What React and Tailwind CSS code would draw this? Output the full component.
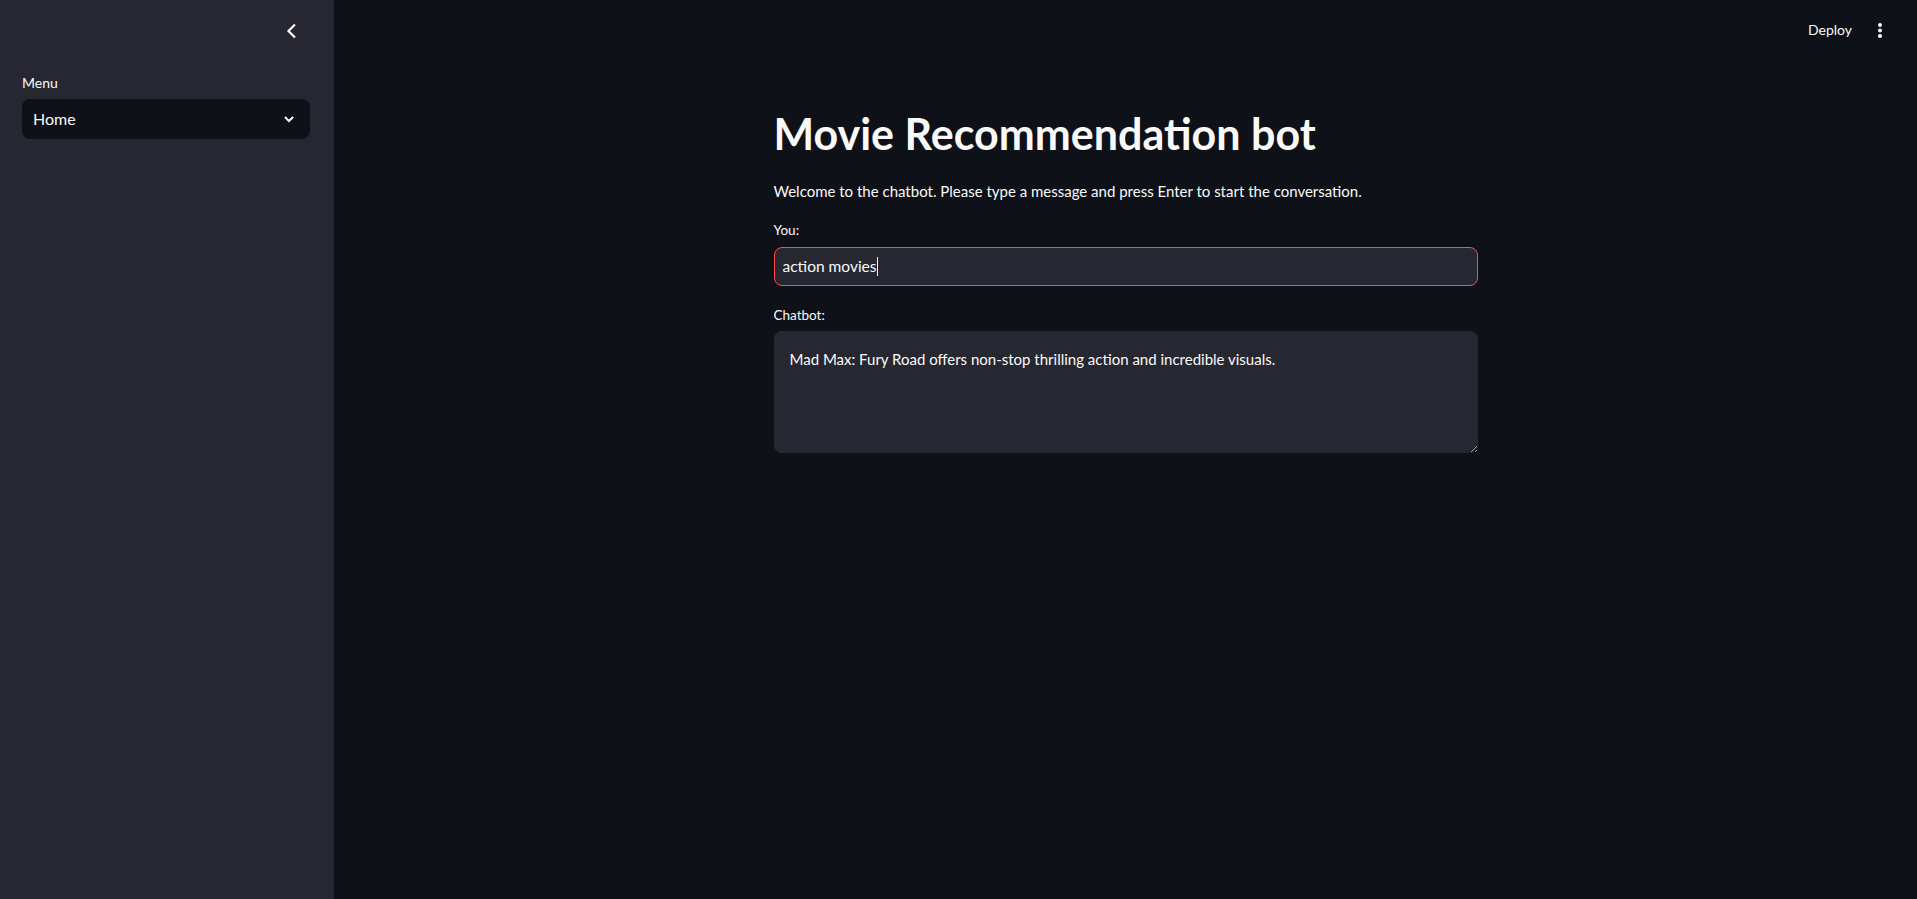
import React from 'react';

const font = { fontFamily: '"Source Sans Pro", "Lato", "Liberation Sans", sans-serif' };

function Sidebar() {
  return (
    <aside className="w-[334px] shrink-0 bg-[#262730] h-screen pl-[22px] pr-[24px]">
      <div className="h-[62px] flex items-center justify-end pr-[6px]">
        <svg width="24" height="24" viewBox="0 0 24 24" fill="none" className="text-[#fafafa]">
          <path d="M15 5.5 8.5 12l6.5 6.5" stroke="currentColor" strokeWidth="2.2" />
        </svg>
      </div>
      <div className="mt-[9px] h-[24px] flex items-center text-sm text-[#fafafa]">Menu</div>
      <div className="mt-1 h-[40px] rounded-lg bg-[#0e1117] flex items-center justify-between pl-[11px] pr-[14px] text-[#fafafa]">
        <span className="text-base">Home</span>
        <svg width="14" height="14" viewBox="0 0 24 24" fill="none">
          <path d="M5 8.5l7 7 7-7" stroke="currentColor" strokeWidth="3.4" />
        </svg>
      </div>
    </aside>
  );
}

function Header() {
  return (
    <div className="h-[60px] flex items-center justify-end pr-[35px] text-[#fafafa]">
      <span className="text-sm">Deploy</span>
      <svg width="4" height="15" viewBox="0 0 4 15" className="ml-[26px]" fill="currentColor">
        <circle cx="2" cy="2" r="2" />
        <circle cx="2" cy="7.5" r="2" />
        <circle cx="2" cy="13" r="2" />
      </svg>
    </div>
  );
}

export default function App() {
  return (
    <div className="flex w-full h-screen bg-[#0e1117] overflow-hidden" style={font}>
      <Sidebar />
      <main className="flex-1 flex flex-col">
        <Header />
        <div className="w-[704px] mx-auto text-[#fafafa]">
          <h1 className="mt-[47px] text-[43px] leading-[53px] font-bold">Movie Recommendation bot</h1>
          <p className="mt-[19px] text-[15px] leading-6">
            Welcome to the chatbot. Please type a message and press Enter to start the conversation.
          </p>
          <label className="block mt-[17px] text-[13.5px] leading-5">You:</label>
          <div className="mt-[7px] h-[39px] rounded-lg border border-[#ff4b4b] bg-[#262730] flex items-center px-2 text-[15.5px]">
            <span>action movies</span>
            <span className="w-px h-[19px] bg-[#fafafa]" />
          </div>
          <label className="block mt-[19px] text-[13.5px] leading-5">Chatbot:</label>
          <textarea
            readOnly
            value="Mad Max: Fury Road offers non-stop thrilling action and incredible visuals."
            className="mt-[6px] block w-full h-[122px] rounded-lg bg-[#262730] p-4 text-[15px] leading-6 text-[#fafafa] outline-none resize-y [color-scheme:dark]"
          />
        </div>
      </main>
    </div>
  );
}
